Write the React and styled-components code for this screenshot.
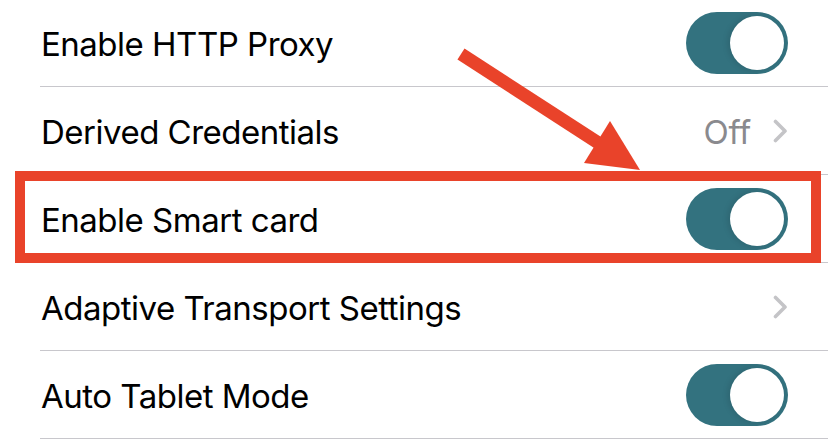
import React from "react";
import styled, { createGlobalStyle } from "styled-components";

const GlobalStyle = createGlobalStyle`
  html, body {
    margin: 0;
    padding: 0;
    background: #ffffff;
  }
  body {
    font-family: Inter, "Open Sans", "Liberation Sans", sans-serif;
    -webkit-font-smoothing: antialiased;
  }
`;

const Screen = styled.div`
  position: relative;
  width: 828px;
  height: 448px;
  overflow: hidden;
  background: #ffffff;
`;

const List = styled.div`
  display: flex;
  flex-direction: column;
  margin-top: -1px;
`;

const Row = styled.div`
  display: flex;
  align-items: center;
  height: 88px;
  box-sizing: border-box;
  margin-left: 40px;
  padding: 2px 40px 0 1px;
  border-bottom: 1px solid #c8c7cc;
`;

const Label = styled.span`
  flex: 1;
  font-size: 33px;
  color: #000000;
  letter-spacing: -0.5px;
`;

const Value = styled.span`
  font-size: 33px;
  color: #8a8a8e;
  letter-spacing: -0.3px;
  margin-right: 22px;
`;

const Track = styled.div`
  position: relative;
  width: 102px;
  height: 62px;
  margin-top: -2px;
  border-radius: 31px;
  background: ${props => (props.on ? "#33727f" : "#e9e9eb")};
`;

const Knob = styled.div`
  position: absolute;
  top: 4px;
  left: ${props => (props.on ? "44px" : "4px")};
  width: 54px;
  height: 54px;
  border-radius: 50%;
  background: #ffffff;
  box-shadow: -2px 0 6px rgba(0, 0, 0, 0.12);
`;

const Chevron = styled.svg`
  width: 15px;
  height: 24px;
  display: block;
  margin-top: -2px;
`;

const Highlight = styled.div`
  position: absolute;
  left: 15px;
  top: 171px;
  width: 806px;
  height: 92px;
  box-sizing: border-box;
  border: 10px solid #e9432a;
  pointer-events: none;
`;

const Overlay = styled.svg`
  position: absolute;
  left: 0;
  top: 0;
  pointer-events: none;
`;

const Toggle = ({ on = true }) => (
  <Track on={on}>
    <Knob on={on} />
  </Track>
);

const Disclosure = () => (
  <Chevron viewBox="0 0 15 24">
    <polyline
      points="2.5,2.5 12,12 2.5,21.5"
      fill="none"
      stroke="#c4c4c7"
      strokeWidth="3.6"
      strokeLinecap="round"
      strokeLinejoin="round"
    />
  </Chevron>
);

const rows = [
  { label: "Enable HTTP Proxy", toggle: true },
  { label: "Derived Credentials", value: "Off", link: true },
  { label: "Enable Smart card", toggle: true },
  { label: "Adaptive Transport Settings", link: true },
  { label: "Auto Tablet Mode", toggle: true },
];

export default function App() {
  return (
    <Screen>
      <GlobalStyle />
      <List>
        {rows.map(r => (
          <Row key={r.label}>
            <Label>{r.label}</Label>
            {r.value && <Value>{r.value}</Value>}
            {r.toggle && <Toggle on />}
            {r.link && <Disclosure />}
          </Row>
        ))}
      </List>
      <Highlight />
      <Overlay width="828" height="448" viewBox="0 0 828 448">
        <line x1="461" y1="54" x2="600" y2="144" stroke="#e9432a" strokeWidth="13" />
        <polygon points="610,121 584,163 640,170" fill="#e9432a" />
      </Overlay>
    </Screen>
  );
}
